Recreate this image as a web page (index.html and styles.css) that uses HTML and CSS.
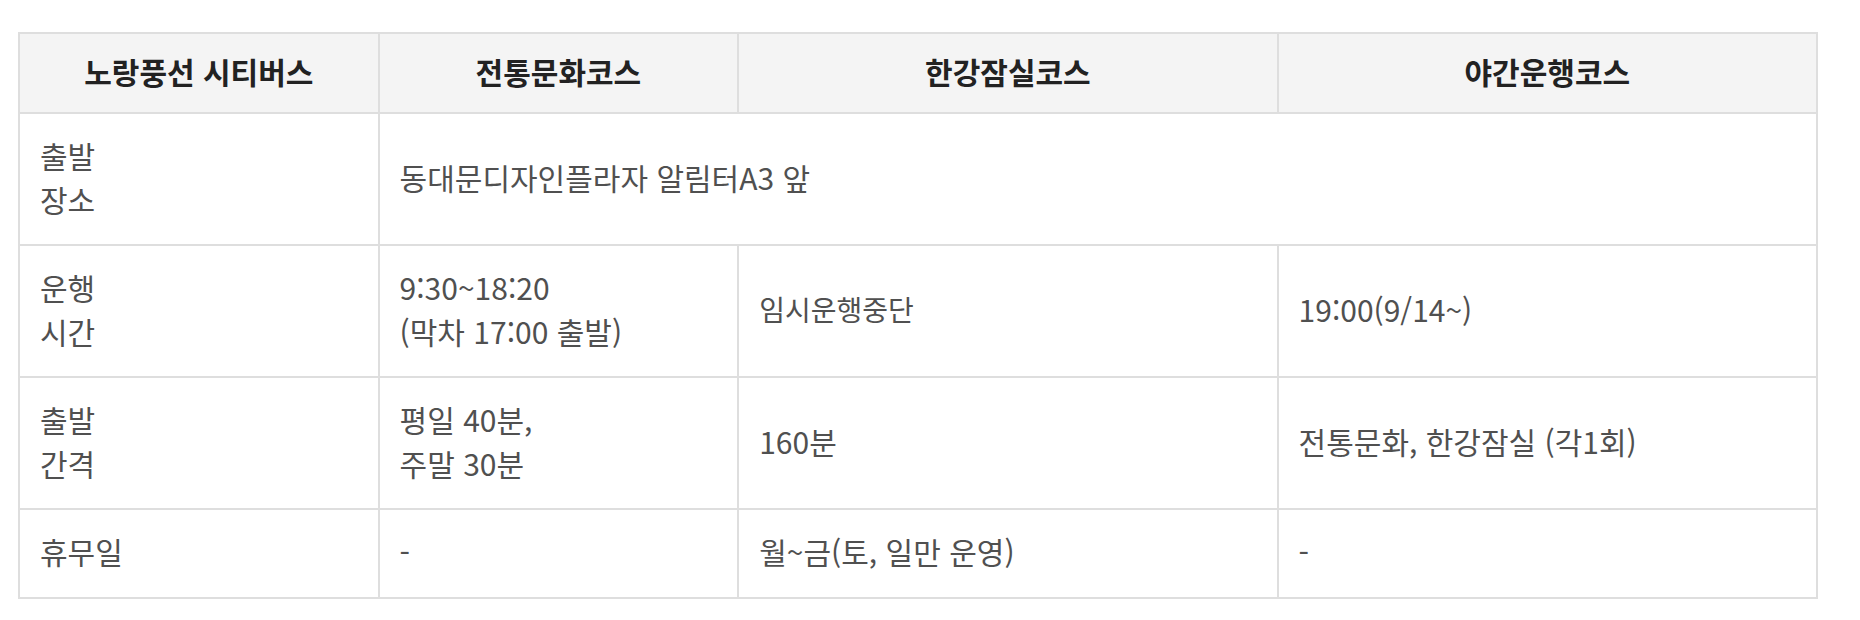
FILE: index.html
```html
<!DOCTYPE html>
<html lang="ko">
<head>
<meta charset="utf-8">
<title>노랑풍선 시티버스</title>
<link rel="stylesheet" href="styles.css">
</head>
<body>
<div class="wrap">
  <table class="bus-table">
    <colgroup>
      <col class="c-narrow">
      <col class="c-narrow">
      <col class="c-wide">
      <col class="c-wide">
    </colgroup>
    <thead>
      <tr>
        <th>노랑풍선 시티버스</th>
        <th>전통문화코스</th>
        <th>한강잠실코스</th>
        <th>야간운행코스</th>
      </tr>
    </thead>
    <tbody>
      <tr>
        <td>출발<br>장소</td>
        <td colspan="3">동대문디자인플라자 알림터A3 앞</td>
      </tr>
      <tr>
        <td>운행<br>시간</td>
        <td>9:30~18:20<br>(막차 17:00 출발)</td>
        <td class="small">임시운행중단</td>
        <td>19:00(9/14~)</td>
      </tr>
      <tr>
        <td>출발<br>간격</td>
        <td>평일 40분,<br>주말 30분</td>
        <td>160분</td>
        <td>전통문화, 한강잠실 (각1회)</td>
      </tr>
      <tr class="last">
        <td>휴무일</td>
        <td>-</td>
        <td>월~금(토, 일만 운영)</td>
        <td>-</td>
      </tr>
    </tbody>
  </table>
</div>
</body>
</html>
```

FILE: styles.css
```css
html, body {
  margin: 0;
  padding: 0;
  background: #ffffff;
}

.wrap {
  padding: 32px 42px 24px 18px;
}

.bus-table {
  width: 100%;
  border-collapse: collapse;
  table-layout: fixed;
  font-family: "Noto Sans CJK KR", "Noto Sans", sans-serif;
  border: 2px solid #dedede;
}

.c-narrow { width: 20%; }
.c-wide { width: 30%; }

.bus-table th,
.bus-table td {
  border: 2px solid #dedede;
  vertical-align: middle;
}

.bus-table th {
  background: #f4f4f4;
  color: #222222;
  font-size: 30px;
  font-weight: 700;
  line-height: 44px;
  padding: 15px 20px 19px;
  text-align: center;
}

.bus-table td {
  color: #505050;
  font-size: 30px;
  font-weight: 400;
  line-height: 44px;
  padding: 19px 20px 23px;
  text-align: left;
}

.bus-table .last td {
  padding-bottom: 24px;
}

.bus-table td.small {
  font-size: 28px;
}
```
